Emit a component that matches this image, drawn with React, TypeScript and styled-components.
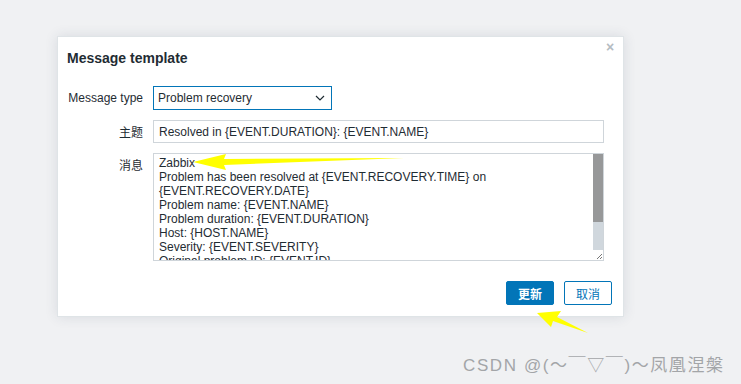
import React from "react";
import styled, { createGlobalStyle } from "styled-components";

const GlobalStyle = createGlobalStyle`
  html, body {
    margin: 0;
    padding: 0;
    background: #f0f1f3;
    font-family: "Liberation Sans", Arial, "Noto Sans CJK SC", sans-serif;
  }
`;

const Page = styled.div`
  position: relative;
  width: 741px;
  height: 384px;
  padding: 36px 0 0 57px;
  box-sizing: border-box;
  overflow: hidden;
`;

const Dialog = styled.div`
  width: 567px;
  box-sizing: border-box;
  background: #fff;
  border: 1px solid #dfe4e7;
  box-shadow: 0 0 12px rgba(40, 60, 80, 0.12);
  padding: 0 0 11px 0;
  position: relative;
`;

const Title = styled.h4`
  margin: 0;
  padding: 13px 10px 0 9px;
  height: 35px;
  box-sizing: border-box;
  font-size: 14px;
  font-weight: bold;
  color: #1f2c33;
`;

const Close = styled.button`
  position: absolute;
  top: 3px;
  right: 6px;
  border: 0;
  background: none;
  padding: 0;
  width: 14px;
  height: 14px;
  color: #b5bcc2;
  font-size: 14px;
  line-height: 14px;
  font-weight: bold;
  cursor: pointer;
`;

const Form = styled.div`
  display: grid;
  grid-template-columns: 85px 1fr;
  column-gap: 10px;
  row-gap: 10px;
  padding: 14px 19px 0 0;
`;

const Label = styled.label<{ $top?: boolean }>`
  text-align: right;
  font-size: 12px;
  color: #1f2c33;
  align-self: ${(p) => (p.$top ? "start" : "center")};
  padding-top: ${(p) => (p.$top ? "3px" : "0")};
  margin-left: -1px;
`;

const Select = styled.div`
  width: 179px;
  height: 24px;
  box-sizing: border-box;
  border: 1px solid #0275b8;
  display: flex;
  align-items: center;
  justify-content: space-between;
  padding: 0 6px 0 4px;
  font-size: 12px;
  color: #1f2c33;
`;

const Input = styled.div`
  height: 23px;
  box-sizing: border-box;
  border: 1px solid #cfd5da;
  display: flex;
  align-items: center;
  padding: 0 5px;
  font-size: 12px;
  color: #1f2c33;
`;

const TextBox = styled.div`
  height: 108px;
  box-sizing: border-box;
  border: 1px solid #cfd5da;
  display: flex;
`;

const TextContent = styled.div`
  flex: 1;
  overflow: hidden;
  padding: 2px 5px;
  font-size: 12px;
  line-height: 14px;
  color: #1f2c33;
  white-space: pre-wrap;
`;

const ScrollTrack = styled.div`
  width: 10px;
  display: flex;
  flex-direction: column;
  background: #d0d7dd;
`;

const ScrollThumb = styled.div`
  height: 68px;
  background: #979899;
`;

const Grip = styled.div`
  margin-top: auto;
  height: 10px;
  background: #fff;
  display: flex;
  align-items: flex-end;
  justify-content: flex-end;
`;

const Footer = styled.div`
  display: flex;
  justify-content: flex-end;
  gap: 10px;
  padding: 20px 11px 0 0;
`;

const Button = styled.button<{ $primary?: boolean }>`
  width: 48px;
  height: 24px;
  box-sizing: border-box;
  border: 1px solid #0275b8;
  border-radius: 2px;
  background: ${(p) => (p.$primary ? "#0275b8" : "#fff")};
  color: ${(p) => (p.$primary ? "#fff" : "#0275b8")};
  font-family: "Noto Sans CJK SC", sans-serif;
  font-weight: ${(p) => (p.$primary ? "bold" : "normal")};
  font-size: 12px;
  padding: 0;
  cursor: pointer;
`;

const Arrow = styled.svg`
  position: absolute;
  left: 0;
  top: 0;
  pointer-events: none;
`;

const Watermark = styled.div`
  position: absolute;
  left: 463px;
  top: 351px;
  font-family: "Liberation Sans", Arial, "Noto Sans CJK SC", sans-serif;
  font-size: 17px;
  color: #a3a5a8;
  letter-spacing: 1.6px;
  white-space: nowrap;
`;

const message = [
  "Zabbix",
  "Problem has been resolved at {EVENT.RECOVERY.TIME} on",
  "{EVENT.RECOVERY.DATE}",
  "Problem name: {EVENT.NAME}",
  "Problem duration: {EVENT.DURATION}",
  "Host: {HOST.NAME}",
  "Severity: {EVENT.SEVERITY}",
  "Original problem ID: {EVENT.ID}",
  "{TRIGGER.URL}",
].join("\n");

export default function App() {
  return (
    <>
      <GlobalStyle />
      <Page>
        <Dialog>
          <Title>Message template</Title>
          <Close>×</Close>
          <Form>
            <Label>Message type</Label>
            <div>
              <Select>
                <span>Problem recovery</span>
                <svg width="10" height="6" viewBox="0 0 10 6">
                  <path d="M1 1l4 4 4-4" fill="none" stroke="#1f2c33" strokeWidth="1.2" />
                </svg>
              </Select>
            </div>
            <Label>主题</Label>
            <Input>Resolved in {"{EVENT.DURATION}"}: {"{EVENT.NAME}"}</Input>
            <Label $top>消息</Label>
            <TextBox>
              <TextContent>{message}</TextContent>
              <ScrollTrack>
                <ScrollThumb />
                <Grip>
                  <svg width="8" height="8" viewBox="0 0 8 8">
                    <path d="M7 2L2 7M7 5L5 7" stroke="#777" strokeWidth="1" />
                  </svg>
                </Grip>
              </ScrollTrack>
            </TextBox>
          </Form>
          <Footer>
            <Button $primary>更新</Button>
            <Button>取消</Button>
          </Footer>
        </Dialog>
        <Arrow width="741" height="384" viewBox="0 0 741 384">
          <path d="M193 162 L226 154 L224 159 L404 158 L224 165 L226 170 Z" fill="#ffff00" />
          <path d="M537 313 L561 311 L557 317 L588 333 L553 321 L551 327 Z" fill="#ffff00" />
        </Arrow>
        <Watermark>CSDN @(～￣▽￣)～凤凰涅槃</Watermark>
      </Page>
    </>
  );
}
